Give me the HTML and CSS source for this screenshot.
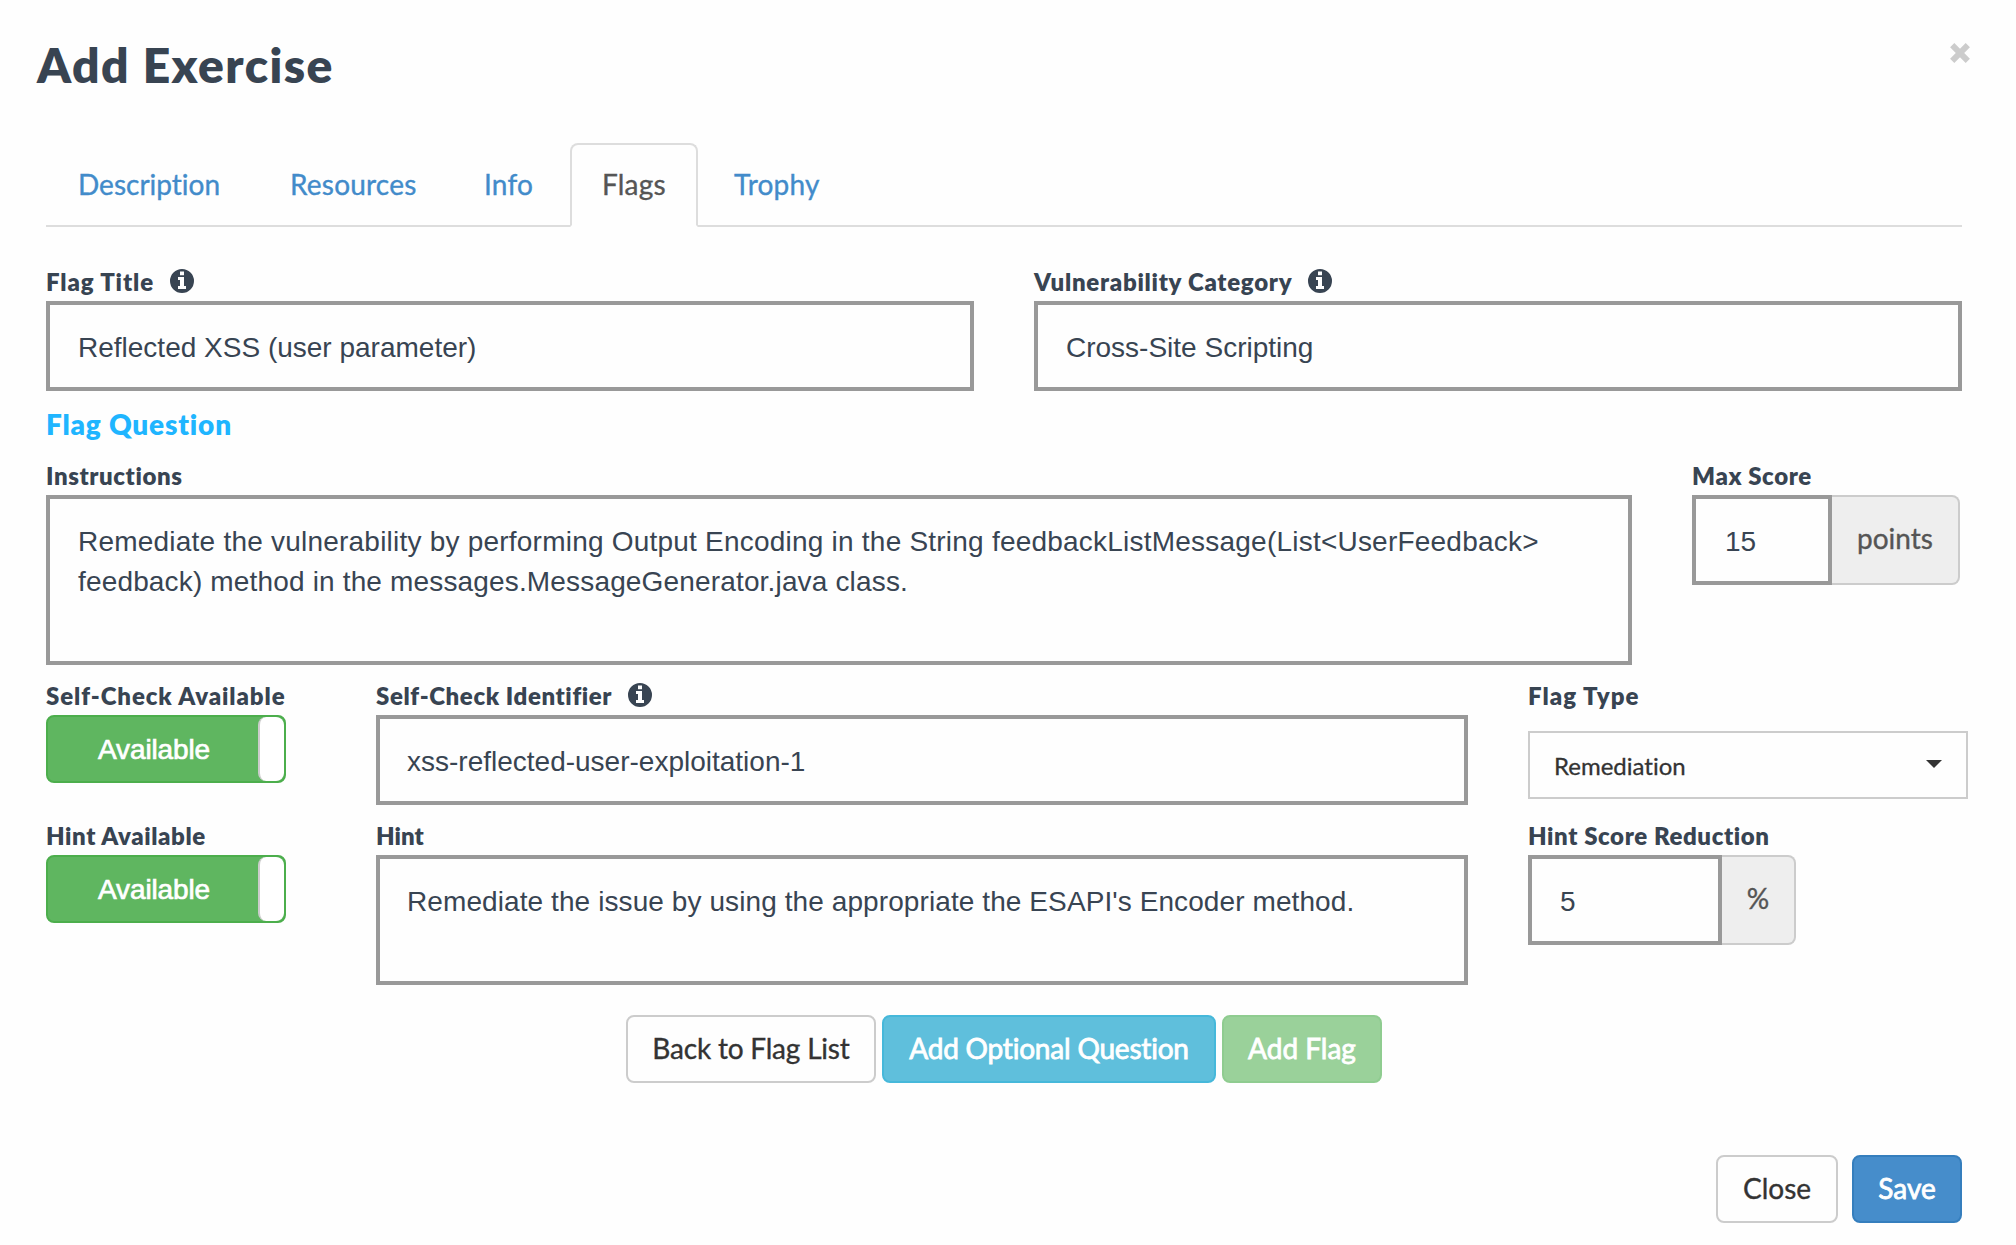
FILE: index.html
```html
<!DOCTYPE html>
<html lang="en">
<head>
<meta charset="utf-8">
<title>Add Exercise</title>
<link rel="stylesheet" href="styles.css">
</head>
<body>
<svg class="defs" width="0" height="0" aria-hidden="true">
  <symbol id="info" viewBox="0 0 24 24">
    <path fill="currentColor" fill-rule="evenodd" d="M12 0a12 12 0 1 0 0 24a12 12 0 1 0 0-24zM10 2.6h4v3.6h-4zM8 8h6v9h2v3H8v-3h2v-6H8z"/>
  </symbol>
</svg>
<div class="modal">
  <header class="modal-header">
    <h1 class="title">Add Exercise</h1>
    <button class="close" aria-label="Close dialog"><svg viewBox="0 0 20 20" width="20" height="20"><path d="M2.2 2.2L17.8 17.8M17.8 2.2L2.2 17.8" stroke="currentColor" stroke-width="6"/></svg></button>
  </header>
  <main class="content">
    <nav class="tabs">
      <a class="tab tab-description">Description</a>
      <a class="tab tab-resources">Resources</a>
      <a class="tab tab-info">Info</a>
      <a class="tab tab-flags active">Flags</a>
      <a class="tab">Trophy</a>
    </nav>
    <div class="row row-title">
      <div class="field">
        <div class="label wide">Flag Title<svg class="info"><use href="#info"/></svg></div>
        <div class="input">Reflected XSS (user parameter)</div>
      </div>
      <div class="field">
        <div class="label medium">Vulnerability Category<svg class="info"><use href="#info"/></svg></div>
        <div class="input">Cross-Site Scripting</div>
      </div>
    </div>
    <h2 class="section">Flag Question</h2>
    <div class="row row-question">
      <div class="field">
        <div class="label">Instructions</div>
        <div class="input area instructions">Remediate the vulnerability by performing Output Encoding in the String feedbackListMessage(List&lt;UserFeedback&gt;<br><span class="second-line">feedback) method in the messages.MessageGenerator.java class.</span></div>
      </div>
      <div class="field">
        <div class="label">Max Score</div>
        <div class="group points"><div class="input">15</div><div class="addon">points</div></div>
      </div>
    </div>
    <div class="row row-check">
      <div class="field">
        <div class="label wide">Self-Check Available</div>
        <div class="toggle"><span class="toggle-text">Available</span><span class="handle"></span></div>
      </div>
      <div class="field">
        <div class="label">Self-Check Identifier<svg class="info"><use href="#info"/></svg></div>
        <div class="input identifier">xss-reflected-user-exploitation-1</div>
      </div>
      <div class="field">
        <div class="label wider">Flag Type</div>
        <div class="select">Remediation<span class="caret"></span></div>
      </div>
    </div>
    <div class="row row-hint">
      <div class="field">
        <div class="label">Hint Available</div>
        <div class="toggle"><span class="toggle-text">Available</span><span class="handle"></span></div>
      </div>
      <div class="field">
        <div class="label tight">Hint</div>
        <div class="input area hint">Remediate the issue by using the appropriate the ESAPI's Encoder method.</div>
      </div>
      <div class="field">
        <div class="label">Hint Score Reduction</div>
        <div class="group percent"><div class="input">5</div><div class="addon">%</div></div>
      </div>
    </div>
    <div class="actions">
      <button class="btn back">Back to Flag List</button>
      <button class="btn optional">Add Optional Question</button>
      <button class="btn add">Add Flag</button>
    </div>
  </main>
  <footer class="modal-footer">
    <button class="btn cancel">Close</button>
    <button class="btn save">Save</button>
  </footer>
</div>
</body>
</html>
```
FILE: styles.css
```css
* { box-sizing: border-box; }

body {
  margin: 0;
  background: #fefefe;
  color: #384452;
  font-family: Lato, "Liberation Sans", sans-serif;
  font-size: 28px;
}

.defs { display: block; height: 0; }

.modal { width: 2016px; height: 1245px; }

.modal-header {
  display: flex;
  justify-content: space-between;
  align-items: flex-start;
  height: 143px;
  padding: 35px 46px 0 37px;
}

.title { margin: 0; font-size: 48px; font-weight: 800; line-height: 60px; letter-spacing: 1.45px; }

.close { margin-top: 8px; padding: 0; border: 0; background: none; color: #ccc; line-height: 0; }

.content { padding: 0 54px 0 46px; }

.tabs { display: flex; gap: 4px; height: 84px; border-bottom: 2px solid #ddd; }

.tab {
  height: 84px;
  padding: 0 30px;
  border: 2px solid transparent;
  border-radius: 8px 8px 0 0;
  line-height: 78px;
  letter-spacing: 0.2px;
  color: #428bca;
  -webkit-text-stroke: 0.35px currentColor;
}

.tab-description { width: 208px; letter-spacing: 0; font-variant-ligatures: none; }
.tab-resources { width: 190px; }
.tab-info { width: 114px; }
.tab-flags { width: 128px; }

.tab.active { border-color: #ddd; border-bottom-color: #fefefe; color: #555; }

.row { display: grid; }
.row-title { grid-template-columns: 928px 928px; column-gap: 60px; margin-top: 34px; }
.row-question { grid-template-columns: 1586px 268px; column-gap: 60px; }
.row-check, .row-hint { grid-template-columns: 240px 1092px 440px; column-gap: 0; margin-top: 10px; }
.row-check, .row-hint { column-gap: 60px; grid-template-columns: 270px 1092px 440px; }
.row-check > :first-child, .row-hint > :first-child { width: 240px; }

.label {
  display: flex;
  gap: 16px;
  height: 40px;
  padding-top: 1px;
  font-size: 24px;
  font-weight: 800;
  line-height: 39px;
  letter-spacing: 0.6px;
  white-space: nowrap;
}
.label.tight { letter-spacing: 0; }
.label.medium { letter-spacing: 0.73px; }
.label.wide { letter-spacing: 0.9px; }
.label.wider { letter-spacing: 1.05px; }

.info { width: 24px; height: 24px; margin-top: 7px; }

.input {
  height: 90px;
  padding: 0 28px;
  border: 4px solid #999;
  font-family: "Liberation Sans", Arial, sans-serif;
  line-height: 86px;
  white-space: nowrap;
}

.input.area { height: 170px; padding-top: 23px; line-height: 40px; }
.input.instructions { letter-spacing: 0.22px; }
.second-line { letter-spacing: 0.16px; }
.input.hint { height: 130px; padding-left: 27px; letter-spacing: 0.09px; }
.input.identifier { padding-left: 27px; }

.section {
  height: 64px;
  margin: 0;
  font-size: 28px;
  font-weight: 800;
  line-height: 66px;
  letter-spacing: 0.8px;
  color: #1fb5ff;
}

.group { display: flex; }
.points .input { width: 140px; padding-left: 29px; }
.percent .input { width: 194px; }
.addon {
  display: flex;
  justify-content: center;
  width: 128px;
  height: 90px;
  border: 2px solid #ccc;
  border-left: 0;
  border-radius: 0 8px 8px 0;
  background: #eee;
  line-height: 82px;
  color: #555;
  -webkit-text-stroke: 0.35px currentColor;
}
.percent .addon { width: 74px; }

.toggle {
  display: flex;
  width: 240px;
  height: 68px;
  border: 2px solid #4cae4c;
  border-radius: 8px;
  overflow: hidden;
  background: #5fb660;
  color: #fff;
}
.toggle-text {
  width: 210px;
  padding-left: 50px;
  font-family: "Liberation Sans", Arial, sans-serif;
  line-height: 65px;
  letter-spacing: -0.12px;
  -webkit-text-stroke: 0.7px #fff;
}
.handle { width: 26px; border-left: 2px solid #ccc; border-radius: 8px; background: #fff; }

.select {
  display: flex;
  justify-content: space-between;
  align-items: center;
  height: 68px;
  margin-top: 16px;
  padding: 0 24px;
  border: 2px solid #ccc;
  color: #333;
  font-size: 24px;
  font-variant-ligatures: none;
  -webkit-text-stroke: 0.3px currentColor;
}
.caret { margin-bottom: 2px; border: 8px solid transparent; border-top-color: #333; border-bottom: 0; }

.actions { display: flex; gap: 6px; margin: 30px 0 0 580px; }
.btn {
  height: 68px;
  padding: 0 0 2px;
  border: 2px solid #ccc;
  border-radius: 8px;
  background: transparent;
  color: #333;
  font: 28px/60px Lato, sans-serif;
  white-space: nowrap;
  -webkit-text-stroke: 0.35px currentColor;
}
.back { width: 250px; letter-spacing: -0.2px; }
.optional { width: 334px; border-color: #46b8da; background: #5fbfdc; letter-spacing: -0.2px; }
.add { width: 160px; border-color: #8fcc90; background: #9ad19a; }
.save { width: 110px; border-color: #357ebd; background: #468dcb; }
.cancel { width: 122px; }
.optional, .add, .save { color: #fff; -webkit-text-stroke-width: 0.8px; }

.modal-footer { display: flex; justify-content: flex-end; gap: 14px; padding: 72px 54px 0 0; }
```
